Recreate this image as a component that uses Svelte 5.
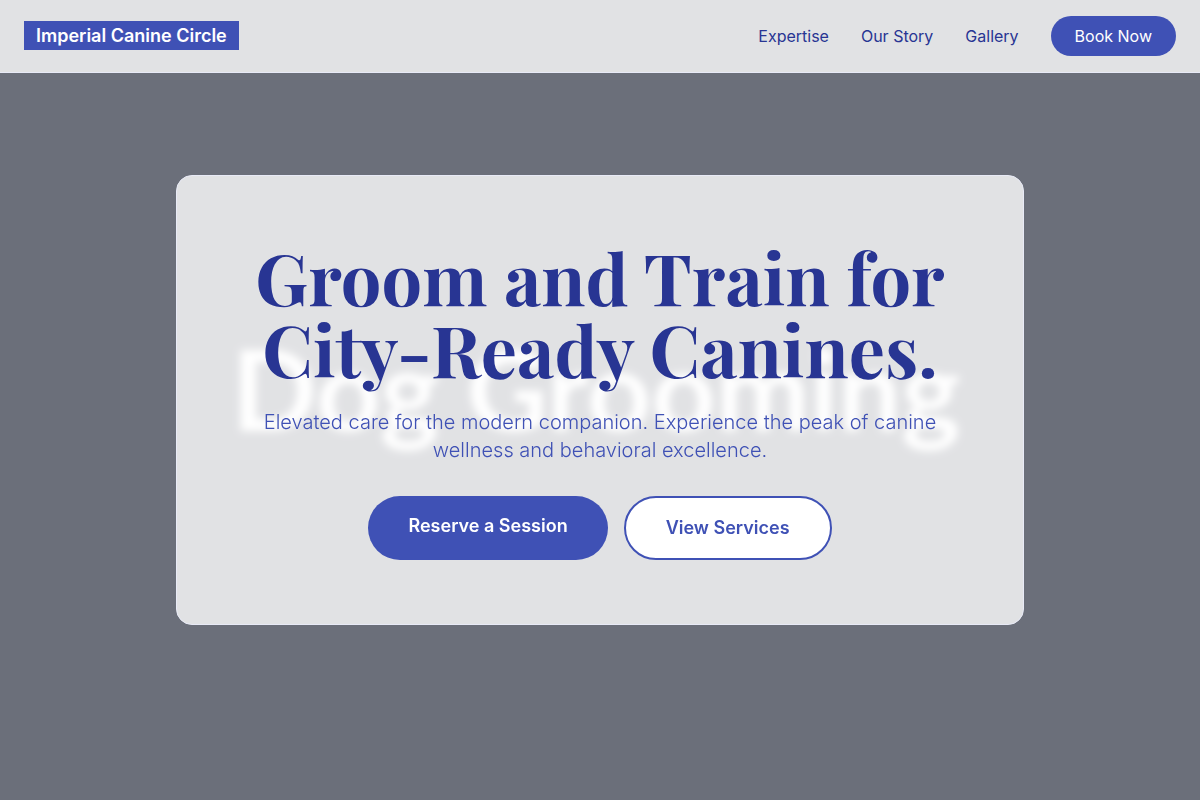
<script lang="ts">
  const navLinks = [
    { label: 'Expertise', href: '#expertise' },
    { label: 'Our Story', href: '#story' },
    { label: 'Gallery', href: '#gallery' }
  ];
</script>

<svelte:head>
  <title>Imperial Canine Circle</title>
</svelte:head>

<div class="page">
  <header class="site-header">
    <div class="logo">
      <a class="brand" href="#top">Imperial Canine Circle</a>
    </div>
    <nav class="nav">
      {#each navLinks as link}
        <a class="nav-link" href={link.href}>{link.label}</a>
      {/each}
      <a class="book" href="#book">Book Now</a>
    </nav>
  </header>

  <main class="hero" id="top">
    <div class="backdrop" aria-hidden="true">Dog Grooming</div>
    <div class="card-wrap">
      <section class="card">
        <h1>Groom and Train for City-Ready Canines.</h1>
        <p>Elevated care for the modern companion. Experience the peak of canine wellness and behavioral excellence.</p>
        <div class="actions">
          <a class="btn primary" href="#book">Reserve a Session</a>
          <a class="btn secondary" href="#expertise">View Services</a>
        </div>
      </section>
    </div>
  </main>
</div>

<style>
:global(body) {
  margin: 0;
  background: #6b6f7a;
}
.page,
.page * {
  box-sizing: border-box;
}
.page {
  display: grid;
  grid-template-columns: 100%;
  grid-template-rows: auto 1fr;
  min-height: 100vh;
  font-family: Inter, 'Liberation Sans', sans-serif;
  font-size: 16px;
  line-height: 24px;
}
a {
  text-decoration: none;
}
/* the hero runs under the translucent header */
.site-header {
  grid-area: 1 / 1;
  z-index: 1;
  display: flex;
  align-items: center;
  justify-content: space-between;
  padding: 16px 24px;
  background: rgba(255, 255, 255, 0.8);
  border-bottom: 1px solid #e8eaf6;
}
.logo {
  font-size: 18px;
  line-height: 28px;
}
.brand {
  padding: 4px 12px;
  background: #3f51b5;
  color: #fff;
  font-weight: 600;
}
.nav {
  display: flex;
  align-items: center;
  gap: 32px;
}
.nav-link {
  color: #283593;
}
.book {
  padding: 8px 24px;
  border-radius: 20px;
  background: #3f51b5;
  color: #fff;
}
.hero {
  grid-area: 1 / 1 / 3 / 2;
  display: grid;
  grid-template-columns: 100%;
  align-items: center;
  background: #6b6f7a;
}
.backdrop {
  grid-area: 1 / 1;
  padding: 0 8px 24px 0;
  color: #fff;
  font-family: Lato, 'Open Sans', sans-serif;
  font-size: 112px;
  font-weight: 700;
  line-height: 144px;
  text-align: center;
  white-space: nowrap;
}
.card-wrap {
  grid-area: 1 / 1;
  width: 100%;
  max-width: 896px;
  margin: 0 auto;
  padding: 0 24px;
}
.card {
  padding: 64px;
  border: 1px solid #e8eaf6;
  border-radius: 16px;
  background: rgba(255, 255, 255, 0.8);
  backdrop-filter: blur(4px);
  text-align: center;
}
h1 {
  margin: 0 0 24px;
  color: #283593;
  font-family: 'Playfair Display', 'Liberation Serif', serif;
  font-size: 72px;
  font-weight: 700;
  line-height: 72px;
}
p {
  max-width: 680px;
  margin: 0 auto 32px;
  color: #3f51b5;
  font-size: 20px;
  font-weight: 300;
  line-height: 28px;
}
.actions {
  display: flex;
  flex-wrap: wrap;
  justify-content: center;
  gap: 16px;
}
.btn {
  padding: 16px 40px;
  border-radius: 32px;
  font-size: 18px;
  font-weight: 600;
  line-height: 28px;
}
.primary {
  background: #3f51b5;
  color: #fff;
}
.secondary {
  border: 2px solid #3f51b5;
  background: #fff;
  color: #3f51b5;
}
@media (max-width: 800px) {
  .nav-link {
    display: none;
  }
  .card {
    padding: 32px;
  }
  h1 {
    font-size: 48px;
    line-height: 48px;
  }
}
</style>
